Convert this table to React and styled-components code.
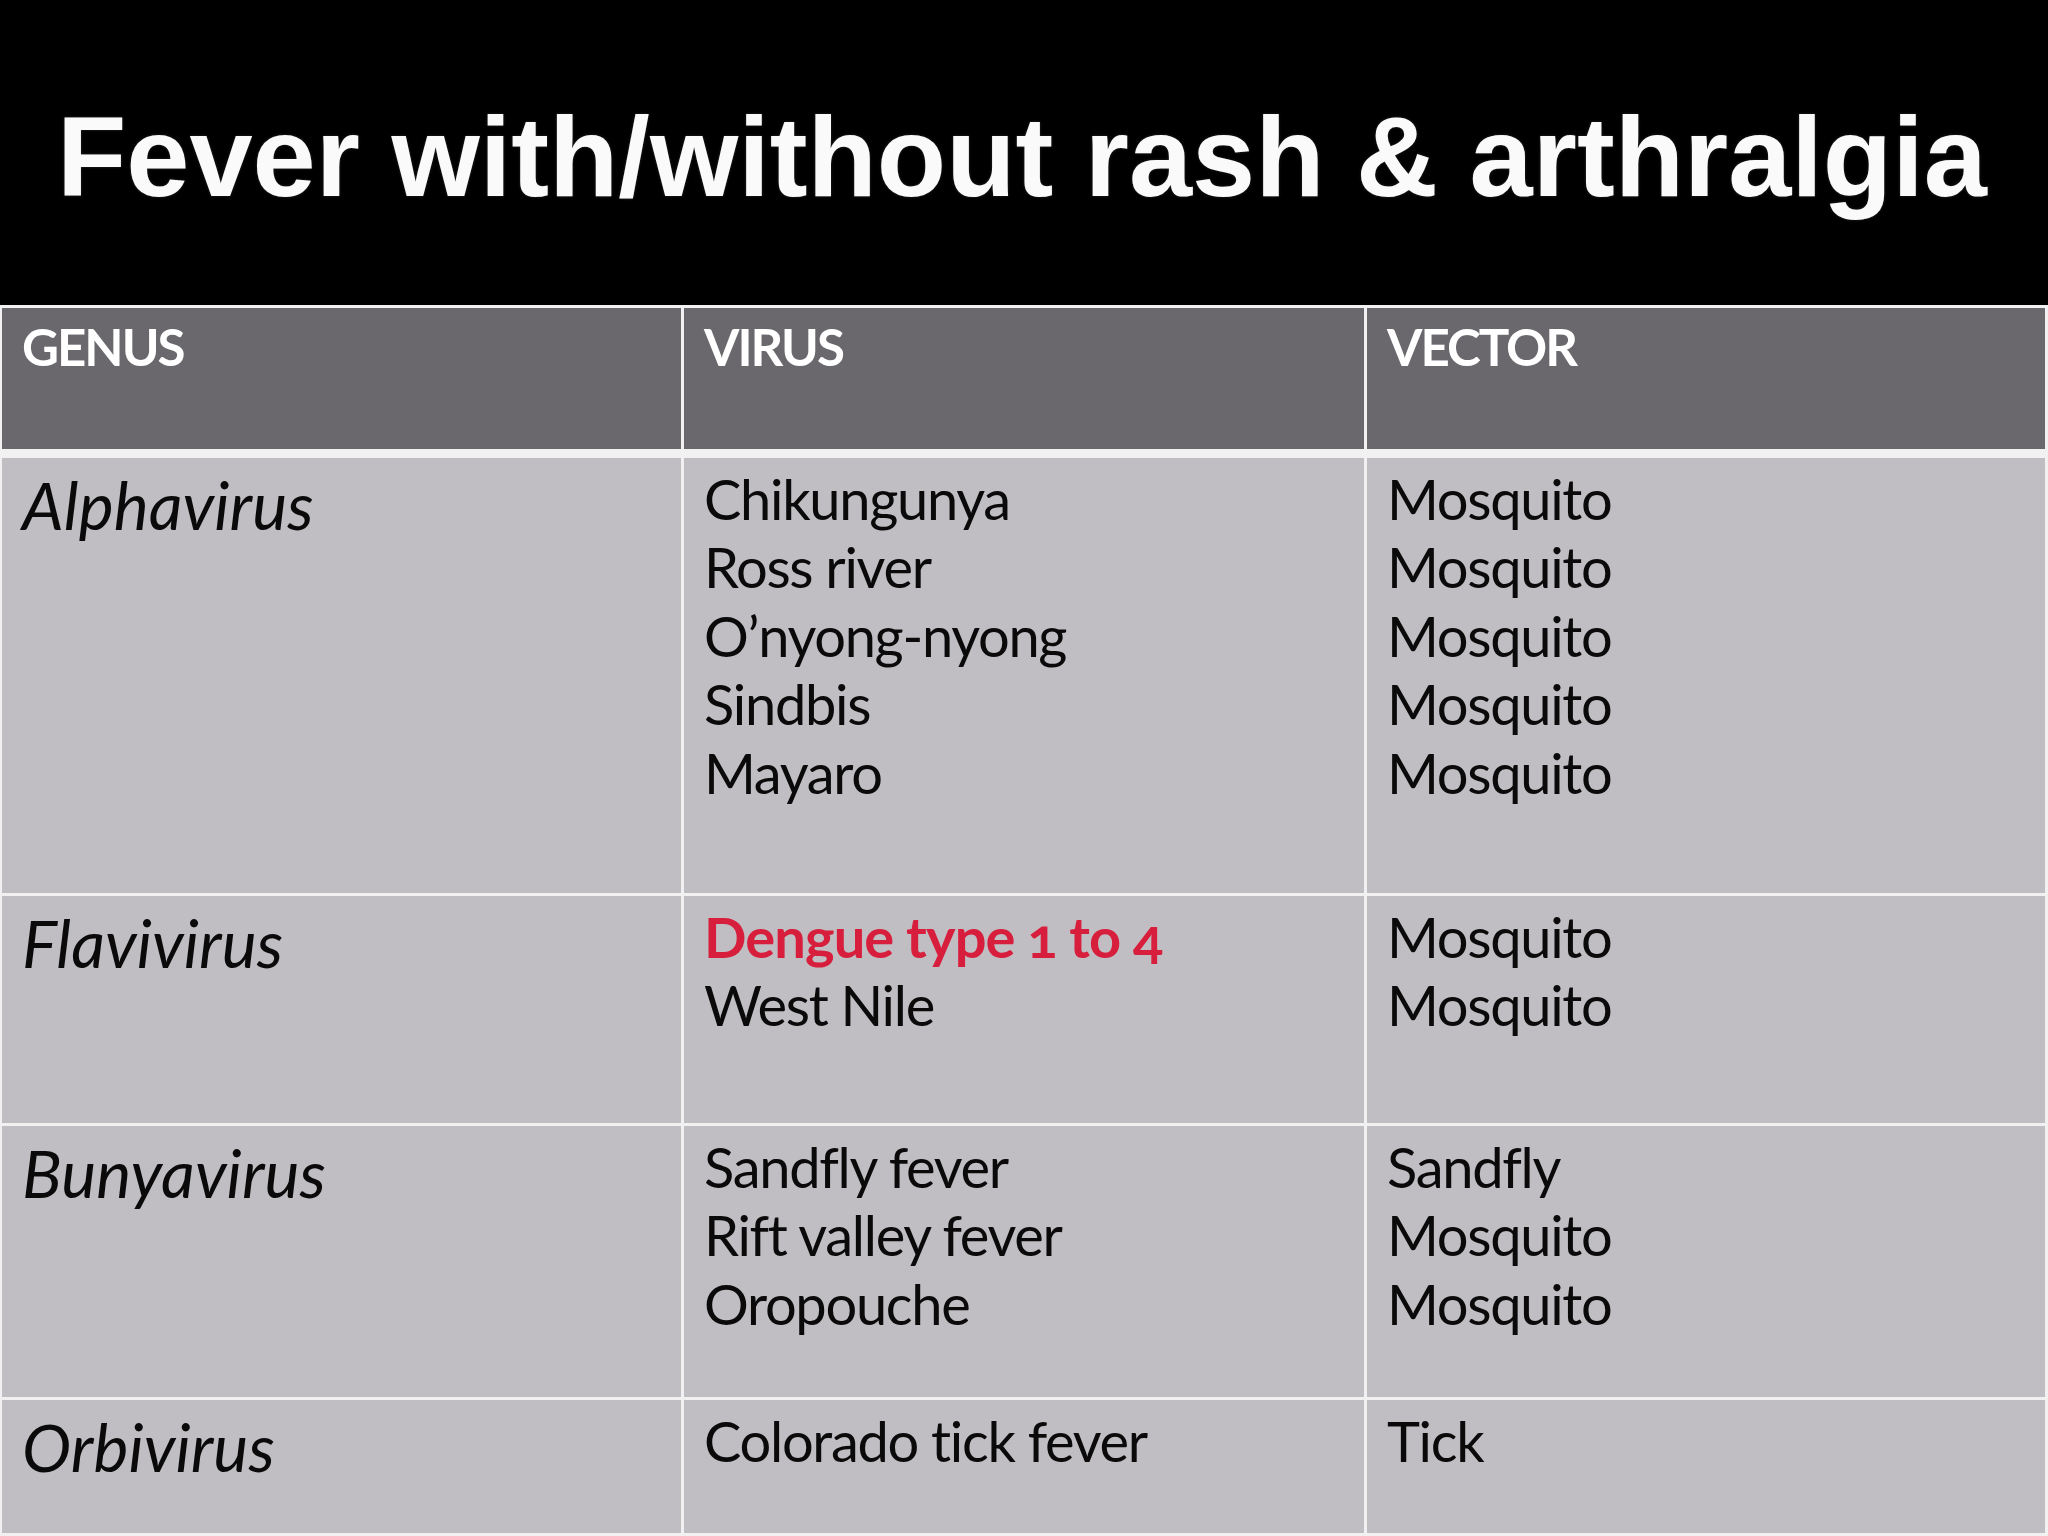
import styled, { createGlobalStyle } from "styled-components";

const GlobalStyle = createGlobalStyle`
  html, body {
    margin: 0;
    padding: 0;
    background: #000;
  }
  #root {
    width: 2048px;
    height: 1536px;
    overflow: hidden;
  }
`;

const Slide = styled.div`
  width: 2048px;
  height: 1536px;
  background: #000;
  display: flex;
  flex-direction: column;
`;

const Title = styled.h1`
  margin: 0;
  height: 305px;
  box-sizing: border-box;
  padding: 100px 0 0 57px;
  font-family: "Liberation Sans", Arial, sans-serif;
  font-weight: 700;
  font-size: 113.5px;
  line-height: 113px;
  color: #fafafa;
  white-space: nowrap;
  text-shadow: 0 0 3px rgba(120, 120, 120, 0.35);
`;

const Table = styled.div`
  flex: 1;
  background: #f1f1f1;
  padding: 3px 3px 3px 2px;
  display: flex;
  flex-direction: column;
  gap: 3px;
`;

const Row = styled.div`
  display: grid;
  grid-template-columns: 679px 680px 1fr;
  column-gap: 3px;
  height: ${(p) => p.$h}px;
  margin-bottom: ${(p) => (p.$head ? 6 : 0)}px;
`;

const Cell = styled.div`
  box-sizing: border-box;
  padding: 7px 20px 0 20px;
  background: ${(p) => (p.$head ? "#6a686c" : "#c0bec2")};
  font-family: Lato, "Open Sans", sans-serif;
  color: #0a0a0a;
  overflow: hidden;
`;

const HeadText = styled.div`
  font-weight: 700;
  font-size: 51px;
  line-height: 64px;
  color: #fff;
  letter-spacing: -2px;
`;

const Genus = styled.div`
  font-style: italic;
  font-size: 66px;
  line-height: 80px;
  letter-spacing: 0.1px;
`;

const Line = styled.div`
  font-size: 56px;
  line-height: 68.4px;
  white-space: nowrap;
  font-variant-numeric: oldstyle-nums;
  letter-spacing: -1.3px;
  ${(p) =>
    p.$hot &&
    `
    color: #d71f3d;
    font-weight: 700;
    letter-spacing: -0.9px;
  `}
`;

const rows = [
  {
    genus: "Alphavirus",
    h: 435,
    virus: ["Chikungunya", "Ross river", "O\u2019nyong-nyong", "Sindbis", "Mayaro"],
    vector: ["Mosquito", "Mosquito", "Mosquito", "Mosquito", "Mosquito"],
  },
  {
    genus: "Flavivirus",
    h: 227,
    virus: ["Dengue type 1 to 4", "West Nile"],
    hot: 0,
    vector: ["Mosquito", "Mosquito"],
  },
  {
    genus: "Bunyavirus",
    h: 271,
    virus: ["Sandfly fever", "Rift valley fever", "Oropouche"],
    vector: ["Sandfly", "Mosquito", "Mosquito"],
  },
  {
    genus: "Orbivirus",
    h: 133,
    virus: ["Colorado tick fever"],
    vector: ["Tick"],
  },
];

export default function App() {
  return (
    <>
      <GlobalStyle />
      <Slide>
        <Title>Fever with/without rash &amp; arthralgia</Title>
        <Table>
          <Row $h={141} $head>
            <Cell $head>
              <HeadText>GENUS</HeadText>
            </Cell>
            <Cell $head>
              <HeadText>VIRUS</HeadText>
            </Cell>
            <Cell $head>
              <HeadText>VECTOR</HeadText>
            </Cell>
          </Row>
          {rows.map((r) => (
            <Row key={r.genus} $h={r.h}>
              <Cell>
                <Genus>{r.genus}</Genus>
              </Cell>
              <Cell>
                {r.virus.map((v, i) => (
                  <Line key={i} $hot={r.hot === i}>
                    {v}
                  </Line>
                ))}
              </Cell>
              <Cell>
                {r.vector.map((v, i) => (
                  <Line key={i}>{v}</Line>
                ))}
              </Cell>
            </Row>
          ))}
        </Table>
      </Slide>
    </>
  );
}
